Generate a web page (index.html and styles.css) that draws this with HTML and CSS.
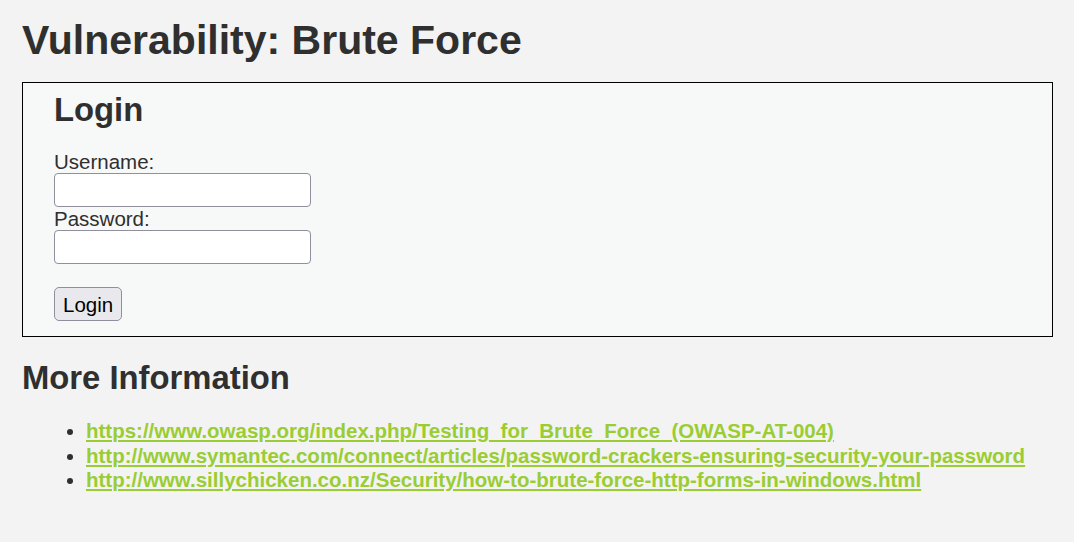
FILE: index.html
```html
<!DOCTYPE html>
<html>
<head>
<meta charset="utf-8">
<title>Vulnerability: Brute Force</title>
<link rel="stylesheet" href="styles.css">
</head>
<body>
<div class="page">
  <h1 class="title">Vulnerability: Brute Force</h1>
  <div class="code-area">
    <h2 class="box-title">Login</h2>
    <form class="login-form" action="#" onsubmit="return false;">
      <label class="field-label" for="username">Username:</label>
      <input class="text-input" type="text" id="username" name="username">
      <label class="field-label" for="password">Password:</label>
      <input class="text-input" type="password" id="password" name="password">
      <button class="login-btn" type="submit">Login</button>
    </form>
  </div>
  <h2 class="section-title">More Information</h2>
  <ul class="info-list">
    <li><a href="#">https://www.owasp.org/index.php/Testing_for_Brute_Force_(OWASP-AT-004)</a></li>
    <li><a href="#">http://www.symantec.com/connect/articles/password-crackers-ensuring-security-your-password</a></li>
    <li><a href="#">http://www.sillychicken.co.nz/Security/how-to-brute-force-http-forms-in-windows.html</a></li>
  </ul>
</div>
</body>
</html>
```
FILE: styles.css
```css
html, body {
  margin: 0;
  padding: 0;
  background: #f3f3f3;
}
body {
  font-family: "Liberation Sans", Arial, sans-serif;
  font-size: 20.5px;
  color: #2f2f2f;
}
.page {
  padding: 0 21px 0 22px;
}
.title {
  margin: 17px 0 18px;
  font-size: 41px;
  font-weight: bold;
  line-height: 47px;
}
.code-area {
  border: 1px solid #000;
  background: #f7f8f8;
  padding: 8px 31px 15px;
}
.box-title {
  margin: 0 0 21px;
  font-size: 32.8px;
  line-height: 38px;
}
.login-form {
  display: flex;
  flex-direction: column;
  align-items: flex-start;
}
.field-label {
  display: block;
  line-height: 23px;
}
.text-input {
  box-sizing: border-box;
  width: 257px;
  height: 34px;
  margin: 0;
  border: 1px solid #8f8f9d;
  border-radius: 4px;
  background: #fff;
  font: inherit;
  padding: 2px 6px;
}
.login-btn {
  margin-top: 23px;
  box-sizing: border-box;
  height: 34px;
  padding: 4px 8px;
  border: 1px solid #8f8f9d;
  border-radius: 5px;
  background: #e9e9ed;
  color: #000;
  font-family: "Liberation Sans", Arial, sans-serif;
  font-size: 20.5px;
  line-height: 23px;
}
.section-title {
  margin: 22px 0 0;
  font-size: 32.8px;
  line-height: 38px;
}
.info-list {
  margin: 22px 0 0;
  padding-left: 64px;
}
.info-list li {
  line-height: 24.5px;
}
.info-list a {
  color: #9acd32;
  font-weight: bold;
  text-decoration: underline;
}
```
